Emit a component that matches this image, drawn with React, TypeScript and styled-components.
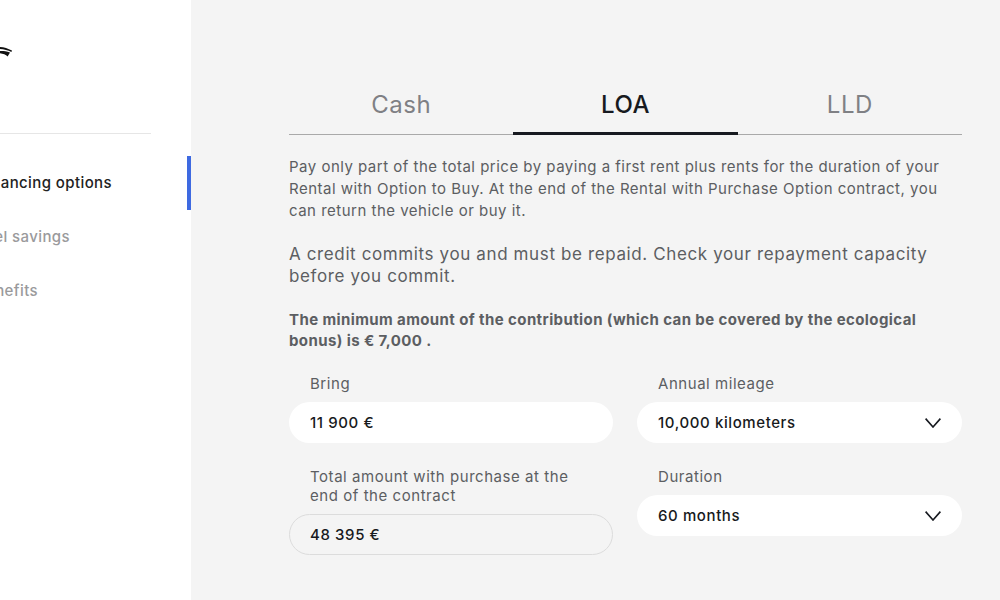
import styled, { createGlobalStyle } from 'styled-components';

const GlobalStyle = createGlobalStyle`
  html, body {
    margin: 0;
    padding: 0;
    width: 1000px;
    height: 600px;
    overflow: hidden;
    background: #f4f4f4;
    font-family: 'Inter', 'Liberation Sans', sans-serif;
  }
  * { box-sizing: border-box; }
`;

const StyledPage = styled.div`
  display: flex;
  width: 1000px;
  height: 600px;
  overflow: hidden;
`;

const StyledSidebar = styled.aside`
  flex: 0 0 191px;
  height: 100%;
  background: #fff;
  overflow: hidden;
`;

const StyledLogoRow = styled.div`
  height: 134px;
  width: 151px;
  padding-top: 46px;
  border-bottom: 1px solid #e6e6e6;
`;

const StyledLogo = styled.svg`
  display: block;
  width: 13px;
  height: 11px;
`;

const StyledNav = styled.nav`
  display: flex;
  flex-direction: column;
  padding-top: 22px;
`;

const StyledNavItem = styled.div<{ $active?: boolean; $end: number }>`
  height: 54px;
  display: flex;
  align-items: center;
  justify-content: flex-end;
  padding: 0 ${(p) => p.$end}px 1px 0;
  font-size: 15px;
  font-weight: 500;
  letter-spacing: 0.4px;
  white-space: nowrap;
  color: ${(p) => (p.$active ? '#222' : '#9a9a9c')};
  border-right: 4px solid ${(p) => (p.$active ? '#3e6ae1' : 'transparent')};
  overflow: hidden;
`;

const StyledMain = styled.main`
  flex: 1;
  padding: 75px 38px 0 98px;
`;

const StyledTabs = styled.div`
  display: grid;
  grid-template-columns: repeat(3, 1fr);
  border-bottom: 1px solid #a9a9a9;
`;

const StyledTab = styled.div<{ $active?: boolean }>`
  height: 60px;
  padding-top: 1px;
  display: flex;
  align-items: center;
  justify-content: center;
  font-size: 24px;
  font-weight: ${(p) => (p.$active ? 500 : 400)};
  letter-spacing: 0.5px;
  color: ${(p) => (p.$active ? '#171a20' : '#7f8084')};
  border-bottom: 3px solid ${(p) => (p.$active ? '#171a20' : 'transparent')};
  margin-bottom: -1px;
`;

const StyledText = styled.p`
  margin: 21px 0 0;
  font-size: 15px;
  line-height: 22px;
  letter-spacing: 0.49px;
  color: #5c5e62;
`;

const StyledLead = styled.p`
  margin: 21px 0 0;
  font-size: 17px;
  line-height: 22px;
  letter-spacing: 0.62px;
  color: #5c5e62;
`;

const StyledNote = styled.p`
  margin: 22px 0 0;
  font-size: 15px;
  line-height: 21px;
  font-weight: 700;
  letter-spacing: 0.4px;
  color: #5c5e62;
`;

const StyledForm = styled.div`
  display: grid;
  grid-template-columns: 324px 325px;
  column-gap: 24px;
  margin-top: 23px;
`;

const StyledColumn = styled.div`
  display: flex;
  flex-direction: column;
  gap: 24px;
`;

const StyledField = styled.div`
  display: flex;
  flex-direction: column;
  gap: 9px;
`;

const StyledLabel = styled.div`
  padding: 0 40px 0 21px;
  font-size: 15px;
  line-height: 19px;
  letter-spacing: 0.55px;
  color: #5c5e62;
`;

const StyledInput = styled.div<{ $readOnly?: boolean }>`
  height: 41px;
  display: flex;
  align-items: center;
  justify-content: space-between;
  padding: 0 ${(p) => (p.$readOnly ? 20 : 21)}px;
  border-radius: 21px;
  font-size: 15px;
  font-weight: 500;
  letter-spacing: 0.6px;
  color: #171a20;
  background: ${(p) => (p.$readOnly ? 'transparent' : '#fff')};
  border: ${(p) => (p.$readOnly ? '1px solid #dcdcdc' : 'none')};
`;

const StyledChevron = styled.svg`
  width: 16px;
  height: 10px;
  fill: none;
  stroke: #171a20;
  stroke-width: 1.6;
`;

const Chevron = () => (
  <StyledChevron viewBox="0 0 16 10">
    <path d="M0.6 0.6 L8 9 L15.4 0.6" />
  </StyledChevron>
);

const App = () => (
  <>
    <GlobalStyle />
    <StyledPage>
      <StyledSidebar>
        <StyledLogoRow>
          <StyledLogo viewBox="0 0 13 11">
            <path d="M0 1 C4 1.2 8 2.6 12 4.6 L11.4 6 C8 4.4 4 3.4 0 3.1Z" fill="#111" />
            <path d="M0 5 C3 4.8 6 5.2 10 6.4 L7.6 10.4 C6 8.6 3 7.6 0 7.2Z" fill="#111" />
          </StyledLogo>
        </StyledLogoRow>
        <StyledNav>
          <StyledNavItem $active $end={75}>Financing options</StyledNavItem>
          <StyledNavItem $end={117}>Fuel savings</StyledNavItem>
          <StyledNavItem $end={149}>Benefits</StyledNavItem>
        </StyledNav>
      </StyledSidebar>
      <StyledMain>
        <StyledTabs>
          <StyledTab>Cash</StyledTab>
          <StyledTab $active>LOA</StyledTab>
          <StyledTab>LLD</StyledTab>
        </StyledTabs>
        <StyledText>
          Pay only part of the total price by paying a first rent plus rents for the duration of your
          Rental with Option to Buy. At the end of the Rental with Purchase Option contract, you can
          return the vehicle or buy it.
        </StyledText>
        <StyledLead>
          A credit commits you and must be repaid. Check your repayment capacity before you commit.
        </StyledLead>
        <StyledNote>
          The minimum amount of the contribution (which can be covered by the ecological bonus) is € 7,000 .
        </StyledNote>
        <StyledForm>
          <StyledColumn>
            <StyledField>
              <StyledLabel>Bring</StyledLabel>
              <StyledInput>11 900 €</StyledInput>
            </StyledField>
            <StyledField>
              <StyledLabel>Total amount with purchase at the end of the contract</StyledLabel>
              <StyledInput $readOnly>48 395 €</StyledInput>
            </StyledField>
          </StyledColumn>
          <StyledColumn>
            <StyledField>
              <StyledLabel>Annual mileage</StyledLabel>
              <StyledInput>
                10,000 kilometers
                <Chevron />
              </StyledInput>
            </StyledField>
            <StyledField>
              <StyledLabel>Duration</StyledLabel>
              <StyledInput>
                60 months
                <Chevron />
              </StyledInput>
            </StyledField>
          </StyledColumn>
        </StyledForm>
      </StyledMain>
    </StyledPage>
  </>
);

export default App;
